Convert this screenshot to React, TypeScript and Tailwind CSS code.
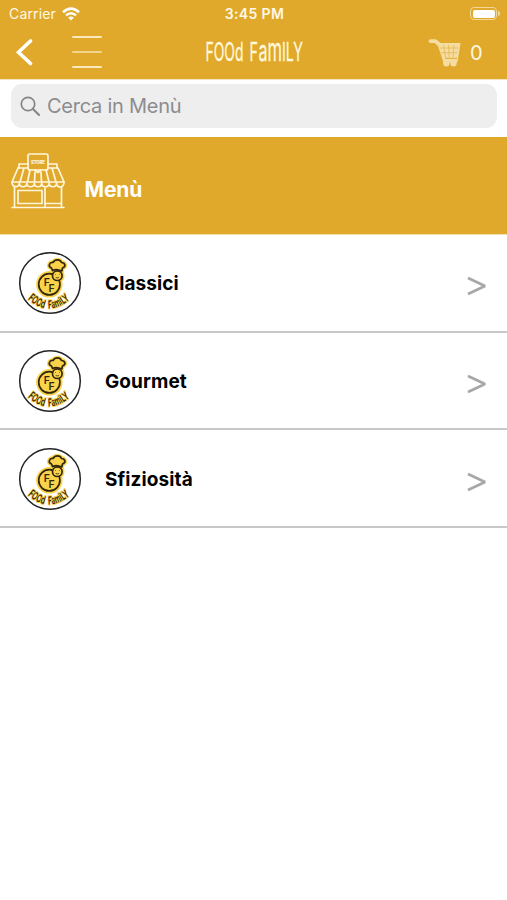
import React from 'react';

const rows = ['Classici', 'Gourmet', 'Sfiziosità'];

function BrandTitle() {
  return (
    <svg width="100" height="26" viewBox="0 0 100 26" className="overflow-visible" fill="#fff8dd" stroke="#fff8dd" strokeWidth=".3" fontFamily="Inter, sans-serif" fontWeight="400">
      <text x="0.5" y="22" fontSize="25" textLength="38" lengthAdjust="spacingAndGlyphs">FOOd</text>
      <text y="22" fontSize="25">
        <tspan x="44.5" textLength="8.5" lengthAdjust="spacingAndGlyphs">F</tspan>
        <tspan x="53.5" fontSize="29" textLength="9" lengthAdjust="spacingAndGlyphs">a</tspan>
        <tspan x="62.5" fontSize="32" textLength="14.5" lengthAdjust="spacingAndGlyphs">m</tspan>
        <tspan x="77" textLength="21" lengthAdjust="spacingAndGlyphs">ILY</tspan>
      </text>
    </svg>
  );
}

function Cart() {
  return (
    <svg width="34" height="30" viewBox="0 0 34 30" fill="none">
      <path d="M2.5 3.2h5l3.5 3" stroke="#f5dca0" strokeWidth="3.8" strokeLinecap="round" strokeLinejoin="round" />
      <path d="M9 5h23.5l-2.5 16.5l-.8 3H15.5Z" fill="#f5dca0" />
      <path d="M12 10h18M13 14.7h16M15.5 7l2 12M20.5 7l.7 12M26 7l-1 12" stroke="#e5b850" strokeWidth=".8" />
      <path d="M17 20.3h12" stroke="#e0a92b" strokeWidth="1" />
      <circle cx="18.3" cy="25.3" r="3.2" fill="#f5dca0" />
      <circle cx="25.5" cy="25.3" r="3.2" fill="#f5dca0" />
    </svg>
  );
}

function Shop() {
  return (
    <svg width="54" height="56" viewBox="0 0 54 56" fill="none" stroke="#fff6dc" strokeWidth="1.7" strokeLinejoin="round" strokeLinecap="round">
      <path d="M17 11H8v4M37 11h9v4" />
      <rect x="17" y="1" width="20" height="16" rx="2" />
      <path d="M24 17l3 2.5 3-2.5" />
      <text x="20" y="10.5" fontSize="4.5" fontFamily="Inter, sans-serif" fontWeight="800" fill="#fff6dc" stroke="none" textLength="14">STORE</text>
      <path d="M7 15h10M37 15h10L53 29M7 15L1 29M13 15L9 29M19 17L16.5 29M24 19L23.5 29M30 19L30.5 29M35 17L38 29M41 15L45 29M1 29h52" />
      <path d="M1 29c0 6 7.4 6 7.4 1c0 5 7.4 5 7.4 0c0 5 7.5 5 7.5 0c0 5 7.4 5 7.4 0c0 5 7.5 5 7.5 0c0 5 7.4 5 7.4 0c0 6 7.4 5 7.4-1" />
      <path d="M3.5 34v20M50.5 34v20M34 35v19M1 54.5h52M34 50.5h16" />
      <rect x="7" y="37.5" width="24" height="13" />
    </svg>
  );
}

function FamilyLogo({ id }: { id: string }) {
  return (
    <svg width="64" height="64" viewBox="0 0 64 64" fill="none">
      <circle cx="32" cy="32" r="30.3" fill="#fff" stroke="#222428" strokeWidth="1.5" />
      <g stroke="#fbd34b" strokeWidth="4.5" fill="#fbd34b" strokeLinejoin="round">
        <circle cx="31.3" cy="33.3" r="11" />
        <circle cx="39.3" cy="24.7" r="5" />
        <path d="M34.5 19L33.5 17C29.5 15.5 31.5 11 35 11.5C37 8 42 8 43.5 11.5C47 11.5 48.5 15.5 44.5 17L43.8 19.5Z" />
      </g>
      <g stroke="#30260b" strokeWidth="1.7" fill="#fbd34b" strokeLinejoin="round">
        <circle cx="31.3" cy="33.3" r="10.6" />
        <circle cx="39.3" cy="24.7" r="4.8" />
        <path d="M34.5 19.5L33.5 17C29.5 15.5 31.5 11 35 11.5C37 8 42 8 43.5 11.5C47 11.5 48.5 15.5 44.5 17L43.8 20C41 18.6 37 18.2 34.5 19.5Z" />
        <path d="M37.2 23.5h.6M41 23.5h.6M37.7 26.5q1.8.8 3.4 0" strokeWidth=".8" />
      </g>
      <g fill="#30260b" fontFamily="Inter, sans-serif" fontWeight="600" fontSize="10.5">
        <text x="25.8" y="35">F</text>
        <text x="30.5" y="40.5">F</text>
      </g>
      <path id={id} d="M9 47.5Q20 57.5 31 57.5Q42 57.5 54 46.5" />
      <text fontFamily="Inter, sans-serif" fontWeight="600" fontSize="11" fill="#30260b" stroke="#fbd34b" strokeWidth="2" paintOrder="stroke" wordSpacing="4">
        <textPath href={'#' + id} startOffset="1" textLength="47" lengthAdjust="spacingAndGlyphs">FOOd FamiLY</textPath>
      </text>
    </svg>
  );
}

export default function App() {
  return (
    <div className="flex h-[900px] w-[507px] flex-col overflow-hidden bg-white font-['Inter',sans-serif]">
      <header className="h-[79px] shrink-0 bg-[#e0a92b] text-[#fff8e3]">
        <div className="grid h-[27px] grid-cols-3 items-center pl-[9px] pr-[7px]">
          <div className="flex items-center gap-[6px] text-[14px] leading-none">
            <span className="w-[47px] whitespace-nowrap tracking-[0.15px]">Carrier</span>
            <svg width="18" height="14" viewBox="0 0 18 14" fill="none" stroke="#fff" strokeWidth="2.5">
              <path d="M1 5.2Q9-2 17 5.2M4 8.4Q9 4 14 8.4" />
              <path d="M6.2 10.8Q9 8.4 11.8 10.8L9 13.6Z" fill="#fff" stroke="none" />
            </svg>
          </div>
          <span className="pt-px text-center text-[14px] font-semibold leading-none tracking-[0.35px]">3:45 PM</span>
          <div className="flex items-center justify-end gap-px">
            <div className="h-[13px] w-[27px] rounded-[4px] border border-[#f3d796] p-[1.5px]">
              <div className="h-full rounded-[2px] bg-white" />
            </div>
            <div className="h-[5px] w-[2px] rounded-r-full bg-[#f3d796]" />
          </div>
        </div>
        <div className="flex h-[50px] items-center">
          <svg className="ml-[15px]" width="19" height="28" viewBox="0 0 19 28" fill="none" stroke="#fff" strokeWidth="3.6" strokeLinecap="round">
            <path d="M15.5 3L3.5 14.2L15.5 25.5" />
          </svg>
          <div className="ml-[38px] flex h-[32px] w-[30px] flex-col justify-between">
            <div className="h-[2px] rounded-full bg-[#fae9bd]" />
            <div className="h-[2px] rounded-full bg-[#f3d48c]" />
            <div className="h-[2px] rounded-full bg-[#fae9bd]" />
          </div>
          <div className="ml-[103px] h-[26px] w-[100px]"><BrandTitle /></div>
          <div className="ml-[123px] mt-px"><Cart /></div>
          <span className="ml-[8px] mt-px text-[20px] leading-none">0</span>
        </div>
      </header>
      <div className="h-[58px] shrink-0 border-t border-[#f4e5be] bg-white pl-[11px] pr-[10px] pt-[4px]">
        <div className="flex h-[44px] items-center rounded-[11px] bg-[#eeeeee] pl-[9px] text-[#8c8c90]">
          <svg width="21" height="21" viewBox="0 0 21 21" fill="none" stroke="#858588" strokeWidth="1.7" strokeLinecap="round">
            <circle cx="8" cy="8" r="6.7" />
            <path d="M13 13l6 6" strokeWidth="2.1" />
          </svg>
          <span className="ml-[6px] text-[20px] leading-none tracking-[-0.25px]">Cerca in Menù</span>
        </div>
      </div>
      <section className="flex h-[98px] shrink-0 items-start border-b border-[#f3dfb0] bg-[#e0a92b] pl-[11px] pt-[16px]">
        <Shop />
        <h1 className="ml-[19.5px] mt-[26px] text-[21px] font-bold leading-none tracking-[-0.1px] text-white">Menù</h1>
      </section>
      <main>
        {rows.map((name, index) => (
          <div key={name} className="flex h-[97.7px] items-center border-b-2 border-[#c8c8c8] pl-[18px] pr-[20px]">
            <div className="mt-px"><FamilyLogo id={'logo-arc-' + index} /></div>
            <span className="ml-[23px] mt-[2px] text-[19px] font-bold leading-none tracking-[0.1px] text-black">{name}</span>
            <svg className="ml-auto mt-[7px]" width="20" height="20" viewBox="0 0 20 20" fill="none" stroke="#a7a7a7" strokeWidth="2.7">
              <path d="M1 2L18 10L1 18" strokeLinejoin="bevel" />
            </svg>
          </div>
        ))}
      </main>
    </div>
  );
}
